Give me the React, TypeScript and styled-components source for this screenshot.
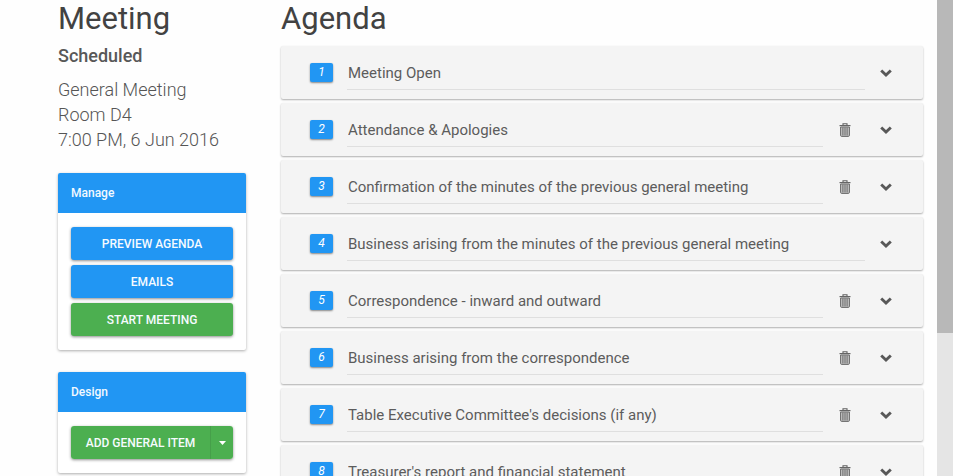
import React from "react";
import styled, { createGlobalStyle } from "styled-components";

const blue = "#2196f3";
const green = "#4caf50";

const GlobalStyle = createGlobalStyle`
  *, *::before, *::after { box-sizing: border-box; }
  body {
    margin: 0;
    background: #fefefe;
    color: #444;
    font-family: Roboto, "Liberation Sans", sans-serif;
    overflow: hidden;
  }
  button, input { font-family: inherit; }
`;

const Page = styled.div`
  display: flex;
  height: 100vh;
  overflow: hidden;
`;

const Content = styled.div`
  flex: 1;
  min-width: 0;
  display: flex;
  align-items: flex-start;
  gap: 35px;
  padding: 0 14px 0 58px;
`;

const Sidebar = styled.aside`
  flex: 0 0 188px;
`;

const Main = styled.main`
  flex: 1;
  min-width: 0;
`;

const Heading = styled.h1`
  margin: 0;
  font-size: 31px;
  line-height: 38px;
  font-weight: 400;
  color: #424242;
`;

const Status = styled.h2`
  margin: 6px 0 9px;
  font-size: 18px;
  line-height: 24px;
  font-weight: 500;
  color: #585858;
`;

const Details = styled.p`
  margin: 0 0 21px;
  font-size: 18px;
  line-height: 25px;
  font-weight: 300;
  color: #555;
`;

const Panel = styled.section`
  margin-bottom: 22px;
  background: #fff;
  border-radius: 2px;
  box-shadow: 0 1px 3px rgba(0, 0, 0, 0.32);
  overflow: hidden;
`;

const PanelTitle = styled.h3`
  margin: 0;
  padding: 0 13px;
  font-size: 12px;
  line-height: 40px;
  font-weight: 500;
  color: #f2f9ff;
  background: ${blue};
`;

const PanelBody = styled.div`
  display: grid;
  gap: 5px;
  padding: 14px 13px;
`;

const Button = styled.button<{ $color: string }>`
  flex: 1;
  height: 33px;
  padding: 0;
  border: 0;
  border-radius: 3px;
  background: ${(p) => p.$color};
  color: #f6fbff;
  font-size: 12px;
  font-weight: 500;
  text-transform: uppercase;
  white-space: nowrap;
  box-shadow: 0 1px 3px rgba(0, 0, 0, 0.45);
  cursor: pointer;
`;

const SplitButton = styled.div`
  display: flex;
  border-radius: 3px;
  box-shadow: 0 1px 3px rgba(0, 0, 0, 0.45);

  ${Button} {
    box-shadow: none;
    border-radius: 3px 0 0 3px;
  }
  ${Button} + ${Button} {
    flex: 0 0 23px;
    display: grid;
    place-items: center;
    border-left: 1px solid #469f4a;
    border-radius: 0 3px 3px 0;
  }
`;

const AgendaList = styled.ol`
  list-style: none;
  margin: 8px 0 0;
  padding: 0;
  display: grid;
  gap: 4px;
`;

const AgendaItem = styled.li`
  display: flex;
  align-items: center;
  height: 53px;
  padding: 0 27px 0 29px;
  background: #f4f4f4;
  border-radius: 2px;
  box-shadow: 0 1px 2px rgba(0, 0, 0, 0.32);
`;

const NumberBadge = styled.span`
  flex: 0 0 23px;
  height: 19px;
  margin-right: 14px;
  border-radius: 2px;
  background: ${blue};
  color: #fff;
  font-size: 12px;
  line-height: 19px;
  font-style: italic;
  text-align: center;
  box-shadow: 0 1px 2px rgba(0, 0, 0, 0.45);
`;

const TitleInput = styled.input`
  flex: 1;
  min-width: 0;
  height: 33px;
  padding: 0 1px 1px;
  align-self: flex-end;
  margin-bottom: 9px;
  border: 0;
  border-bottom: 1px solid #dfdfdf;
  background: transparent;
  color: #5c5c5c;
  font-size: 15px;
  font-weight: 400;
  outline: none;
`;

const IconButton = styled.button<{ $gap: number }>`
  display: grid;
  place-items: center;
  width: 20px;
  height: 23px;
  margin-left: ${(p) => p.$gap}px;
  padding: 0;
  border: 0;
  background: transparent;
  color: #555;
  cursor: pointer;
`;

const ScrollTrack = styled.div`
  flex: 0 0 16px;
  background: #e5e5e5;
`;

const ScrollThumb = styled.div`
  height: 70%;
  background: #b8b8b8;
`;

const TrashIcon = () => (
  <svg width="12" height="14" viewBox="0 0 12 14" fill="none" aria-hidden="true">
    <path d="M4 2V.8h4V2" stroke="#606060" strokeWidth="1.1" />
    <path d="M.5 2.6h11" stroke="#666" strokeWidth="1.2" />
    <path d="M1.6 4h8.8v8.2q0 1.2-1 1.2H2.6q-1 0-1-1.2z" fill="#c4c4c4" stroke="#686868" />
    <path d="M3.9 4.5v8M6 4.5v8M8.1 4.5v8" stroke="#686868" />
  </svg>
);

const ChevronIcon = () => (
  <svg width="12" height="8" viewBox="0 0 12 8" fill="none" aria-hidden="true">
    <path d="M1.2 1.5 6 6l4.800-4.500" stroke="#585858" strokeWidth="2.900" />
  </svg>
);

const CaretIcon = () => (
  <svg width="7" height="4" viewBox="0 0 7 4" aria-hidden="true">
    <path d="M0 0h7L3.500 4z" fill="#fff" />
  </svg>
);

const agenda = [
  { title: "Meeting Open", removable: false },
  { title: "Attendance & Apologies", removable: true },
  { title: "Confirmation of the minutes of the previous general meeting", removable: true },
  { title: "Business arising from the minutes of the previous general meeting", removable: false },
  { title: "Correspondence - inward and outward", removable: true },
  { title: "Business arising from the correspondence", removable: true },
  { title: "Table Executive Committee's decisions (if any)", removable: true },
  { title: "Treasurer's report and financial statement", removable: true },
];

export default function App() {
  return (
    <Page>
      <GlobalStyle />
      <Content>
        <Sidebar>
          <Heading>Meeting</Heading>
          <Status>Scheduled</Status>
          <Details>
            General Meeting
            <br />
            Room D4
            <br />
            7:00 PM, 6 Jun 2016
          </Details>
          <Panel>
            <PanelTitle>Manage</PanelTitle>
            <PanelBody>
              <Button $color={blue}>Preview Agenda</Button>
              <Button $color={blue}>Emails</Button>
              <Button $color={green}>Start Meeting</Button>
            </PanelBody>
          </Panel>
          <Panel>
            <PanelTitle>Design</PanelTitle>
            <PanelBody>
              <SplitButton>
                <Button $color={green}>Add General Item</Button>
                <Button $color={green} aria-label="More item types">
                  <CaretIcon />
                </Button>
              </SplitButton>
            </PanelBody>
          </Panel>
        </Sidebar>
        <Main>
          <Heading>Agenda</Heading>
          <AgendaList>
            {agenda.map((item, i) => (
              <AgendaItem key={item.title}>
                <NumberBadge>{i + 1}</NumberBadge>
                <TitleInput defaultValue={item.title} aria-label={`Title of item ${i + 1}`} />
                {item.removable && (
                  <IconButton $gap={12} aria-label="Delete item">
                    <TrashIcon />
                  </IconButton>
                )}
                <IconButton $gap={item.removable ? 21 : 11} aria-label="Expand item">
                  <ChevronIcon />
                </IconButton>
              </AgendaItem>
            ))}
          </AgendaList>
        </Main>
      </Content>
      <ScrollTrack>
        <ScrollThumb />
      </ScrollTrack>
    </Page>
  );
}
